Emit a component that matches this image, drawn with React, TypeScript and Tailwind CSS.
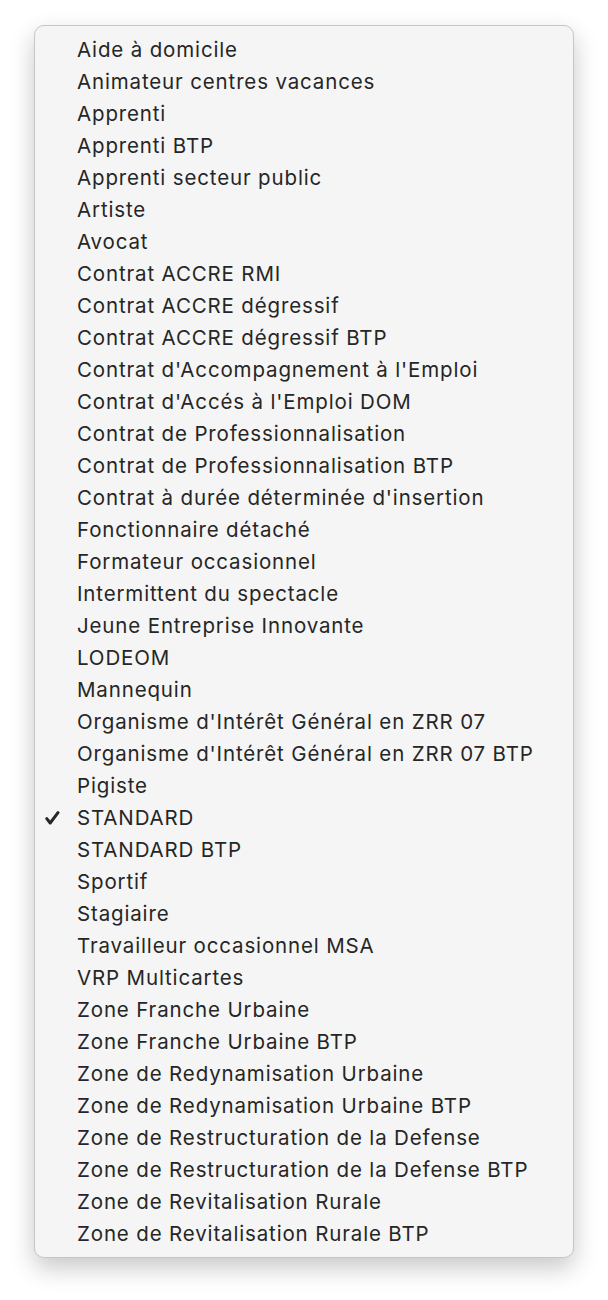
const items = [
  "Aide à domicile",
  "Animateur centres vacances",
  "Apprenti",
  "Apprenti BTP",
  "Apprenti secteur public",
  "Artiste",
  "Avocat",
  "Contrat ACCRE RMI",
  "Contrat ACCRE dégressif",
  "Contrat ACCRE dégressif BTP",
  "Contrat d'Accompagnement à l'Emploi",
  "Contrat d'Accés à l'Emploi DOM",
  "Contrat de Professionnalisation",
  "Contrat de Professionnalisation BTP",
  "Contrat à durée déterminée d'insertion",
  "Fonctionnaire détaché",
  "Formateur occasionnel",
  "Intermittent du spectacle",
  "Jeune Entreprise Innovante",
  "LODEOM",
  "Mannequin",
  "Organisme d'Intérêt Général en ZRR 07",
  "Organisme d'Intérêt Général en ZRR 07 BTP",
  "Pigiste",
  "STANDARD",
  "STANDARD BTP",
  "Sportif",
  "Stagiaire",
  "Travailleur occasionnel MSA",
  "VRP Multicartes",
  "Zone Franche Urbaine",
  "Zone Franche Urbaine BTP",
  "Zone de Redynamisation Urbaine",
  "Zone de Redynamisation Urbaine BTP",
  "Zone de Restructuration de la Defense",
  "Zone de Restructuration de la Defense BTP",
  "Zone de Revitalisation Rurale",
  "Zone de Revitalisation Rurale BTP",
];

const selected = "STANDARD";

export default function App() {
  return (
    <div className="min-h-[1300px] w-[608px] bg-white pt-[25px] pl-[34px] font-['Inter',sans-serif]">
      {/* Popup menu */}
      <div className="w-[540px] rounded-[10px] border border-[#c6c6c6] bg-[#f5f5f5] pt-[8px] pb-[7px] shadow-[0_10px_24px_rgba(0,0,0,0.22)]">
        {items.map((label) => (
          <div key={label} className="flex h-[32px] items-center text-[20.5px] tracking-[0.85px] text-[#262626]">
            <span className="flex w-[42px] pl-[10px]">
              {label === selected && (
                <svg width="15" height="14" viewBox="0 0 15 14" className="text-[#262626]">
                  <path d="M1.8 7.6 L5.2 12 L13 1.6" fill="none" stroke="currentColor" strokeWidth="3" strokeLinecap="round" strokeLinejoin="round" />
                </svg>
              )}
            </span>
            <span className="whitespace-nowrap">{label}</span>
          </div>
        ))}
      </div>
    </div>
  );
}
